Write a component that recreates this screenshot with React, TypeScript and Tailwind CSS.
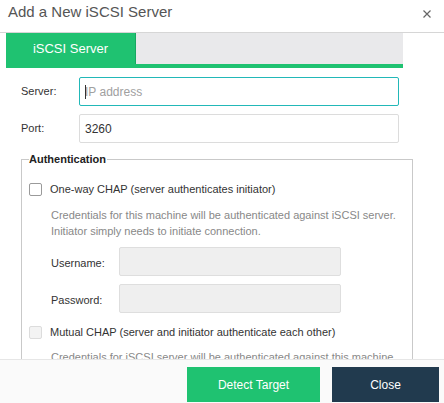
import React from "react"

const sans = "font-['Liberation_Sans',Arial,sans-serif]"

function CheckBox({ disabled = false }: { disabled?: boolean }) {
  return (
    <span
      className={`block w-[13px] h-[13px] rounded-[2px] border ${
        disabled ? "border-[#dcdcdc] bg-[#f3f3f3]" : "border-[#9a9a9a] bg-white"
      }`}
    />
  )
}

function FieldRow({ label, children }: { label: string; children: React.ReactNode }) {
  return (
    <div className="flex items-center">
      <span className="w-[58px] shrink-0 text-[11px] text-[#333]">{label}</span>
      {children}
    </div>
  )
}

function CredRow({ label }: { label: string }) {
  return (
    <div className="flex items-center">
      <span className="w-[68px] shrink-0 pt-[3px] text-[11px] text-[#333]">{label}</span>
      <div className="w-[222px] h-[29px] rounded-[2px] border border-[#dedede] bg-[#efefef]" />
    </div>
  )
}

export default function App() {
  return (
    <div className={`w-[444px] h-[403px] bg-white flex flex-col overflow-hidden ${sans}`}>
      {/* header */}
      <div className="h-[33px] shrink-0 border-b border-[#d6d6d6] flex items-start justify-between pl-[8px] pr-[13px]">
        <h1 className="pt-[2px] text-[15px] leading-[20px] text-[#555]">Add a New iSCSI Server</h1>
        <svg viewBox="0 0 8 8" className="w-[8px] h-[8px] mt-[10px] text-[#666]">
          <path d="M0.5 0.5 L7.5 7.5 M7.5 0.5 L0.5 7.5" stroke="currentColor" strokeWidth="1.2" fill="none" />
        </svg>
      </div>

      <div className="flex-1 overflow-hidden">
        <div className="ml-[6px] w-[397px]">
          <div className="flex h-[31px] bg-[#e9e9eb]">
            <div className="w-[130px] bg-[#1fc271] border-r border-[#17a862] flex items-center justify-center text-[13px] text-white">
              iSCSI Server
            </div>
          </div>
          <div className="h-[4px] bg-[#1fc271]" />
        </div>

        <div className="pl-[21px] mt-[9px] flex flex-col gap-[8px]">
          <FieldRow label="Server:">
            <div className="relative w-[320px] h-[29px] rounded-[2px] border border-[#22b8b8] flex items-center pl-[5px]">
              <span className="absolute left-[5px] top-[7px] w-px h-[14px] bg-[#333]" />
              <span className="text-[12px] text-[#a0a0a0]">IP address</span>
            </div>
          </FieldRow>
          <FieldRow label="Port:">
            <div className="w-[320px] h-[29px] rounded-[2px] border border-[#dcdcdc] flex items-center pl-[5px]">
              <span className="text-[12px] text-[#333]">3260</span>
            </div>
          </FieldRow>
        </div>

        <fieldset className="ml-[21px] mt-[9px] w-[392px] border border-[#c9c9c9] pl-[7px] pb-[20px]">
          <legend className="px-0 pr-[1px] text-[11px] leading-[14px] font-bold text-[#222]">Authentication</legend>

          <label className="mt-[15px] flex items-center gap-[8px] h-[16px]">
            <CheckBox />
            <span className="text-[11px] text-[#333]">One-way CHAP (server authenticates initiator)</span>
          </label>

          <div className="ml-[22px]">
            <p className="mt-[10px] text-[11px] leading-[16px] text-[#888]">
              Credentials for this machine will be authenticated against iSCSI server.
              <br />
              Initiator simply needs to initiate connection.
            </p>
            <div className="mt-[8px] flex flex-col gap-[8px]">
              <CredRow label="Username:" />
              <CredRow label="Password:" />
            </div>
          </div>

          <label className="mt-[11px] flex items-center gap-[8px] h-[16px]">
            <CheckBox disabled />
            <span className="text-[11px] text-[#333]">Mutual CHAP (server and initiator authenticate each other)</span>
          </label>

          <p className="ml-[22px] mt-[9px] text-[11px] leading-[16px] text-[#888]">
            Credentials for iSCSI server will be authenticated against this machine
          </p>
        </fieldset>
      </div>

      {/* footer */}
      <div className="h-[44px] shrink-0 border-t border-[#e6e6e6] bg-[#fafafa] flex items-start justify-end gap-[12px] pr-[5px] pt-[7px]">
        <button className="w-[133px] h-[35px] bg-[#1fc271] text-white text-[12px]">Detect Target</button>
        <button className="w-[107px] h-[35px] bg-[#213a4e] text-white text-[12px]">Close</button>
      </div>
    </div>
  )
}
